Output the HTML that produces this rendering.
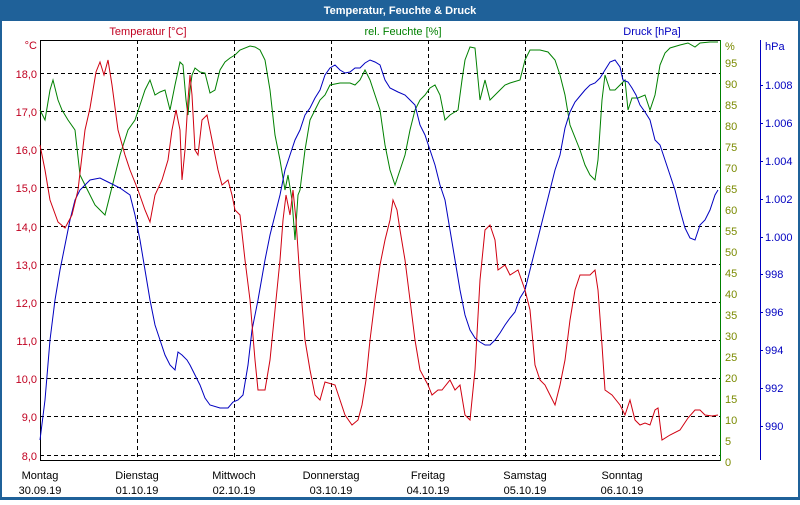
<!DOCTYPE html>
<html><head><meta charset="utf-8"><style>
html,body{margin:0;padding:0;background:#fff}
body{width:800px;height:500px;overflow:hidden;font-family:"Liberation Sans",sans-serif}
</style></head><body>
<svg width="800" height="500" xmlns="http://www.w3.org/2000/svg" font-family="Liberation Sans, sans-serif" font-size="11">
<rect x="0" y="0" width="800" height="500" fill="#1f6199"/>
<rect x="2" y="21" width="796" height="476" fill="#fff"/>
<text x="400" y="14" fill="#fff" font-weight="bold" font-size="11" text-anchor="middle">Temperatur, Feuchte &amp; Druck</text>
<text x="148" y="35" fill="#c00020" text-anchor="middle">Temperatur [°C]</text>
<text x="403" y="35" fill="#008000" text-anchor="middle">rel. Feuchte [%]</text>
<text x="652" y="35" fill="#0000c0" text-anchor="middle">Druck [hPa]</text>
<g stroke="#000" stroke-dasharray="4,3" stroke-width="1">
<line x1="40" y1="73.5" x2="720" y2="73.5"/><line x1="40" y1="111.5" x2="720" y2="111.5"/><line x1="40" y1="149.5" x2="720" y2="149.5"/><line x1="40" y1="187.5" x2="720" y2="187.5"/><line x1="40" y1="226.5" x2="720" y2="226.5"/><line x1="40" y1="264.5" x2="720" y2="264.5"/><line x1="40" y1="302.5" x2="720" y2="302.5"/><line x1="40" y1="340.5" x2="720" y2="340.5"/><line x1="40" y1="378.5" x2="720" y2="378.5"/><line x1="40" y1="416.5" x2="720" y2="416.5"/><line x1="40" y1="455.5" x2="720" y2="455.5"/>
<line x1="137.5" y1="40" x2="137.5" y2="460"/><line x1="234.5" y1="40" x2="234.5" y2="460"/><line x1="331.5" y1="40" x2="331.5" y2="460"/><line x1="428.5" y1="40" x2="428.5" y2="460"/><line x1="525.5" y1="40" x2="525.5" y2="460"/><line x1="622.5" y1="40" x2="622.5" y2="460"/>
</g>
<path d="M40.5 40V460.5H720" stroke="#000" fill="none"/>
<line x1="40" y1="40.5" x2="720" y2="40.5" stroke="#000"/>
<line x1="720.5" y1="40" x2="720.5" y2="461" stroke="#008000"/>
<line x1="760.5" y1="40" x2="760.5" y2="460" stroke="#0000c0"/>
<g fill="#c00020" text-anchor="end">
<text x="37" y="49">°C</text><text x="37" y="78">18,0</text><text x="37" y="116">17,0</text><text x="37" y="154">16,0</text><text x="37" y="192">15,0</text><text x="37" y="231">14,0</text><text x="37" y="269">13,0</text><text x="37" y="307">12,0</text><text x="37" y="345">11,0</text><text x="37" y="383">10,0</text><text x="37" y="421">9,0</text><text x="37" y="460">8,0</text>
</g>
<g fill="#7a8a00">
<text x="725" y="50">%</text><text x="725" y="67">95</text><text x="725" y="88">90</text><text x="725" y="109">85</text><text x="725" y="130">80</text><text x="725" y="151">75</text><text x="725" y="172">70</text><text x="725" y="193">65</text><text x="725" y="214">60</text><text x="725" y="235">55</text><text x="725" y="256">50</text><text x="725" y="277">45</text><text x="725" y="298">40</text><text x="725" y="319">35</text><text x="725" y="340">30</text><text x="725" y="361">25</text><text x="725" y="382">20</text><text x="725" y="403">15</text><text x="725" y="424">10</text><text x="725" y="445">5</text><text x="725" y="466">0</text>
</g>
<g fill="#0000c0">
<text x="765" y="50">hPa</text><text x="765" y="89">1.008</text><text x="765" y="127">1.006</text><text x="765" y="165">1.004</text><text x="765" y="203">1.002</text><text x="765" y="241">1.000</text><text x="765" y="278">998</text><text x="765" y="316">996</text><text x="765" y="354">994</text><text x="765" y="392">992</text><text x="765" y="430">990</text>
</g>
<g stroke="#0000c0"><line x1="761" y1="85.5" x2="763" y2="85.5"/><line x1="761" y1="123.5" x2="763" y2="123.5"/><line x1="761" y1="161.5" x2="763" y2="161.5"/><line x1="761" y1="199.5" x2="763" y2="199.5"/><line x1="761" y1="237.5" x2="763" y2="237.5"/><line x1="761" y1="274.5" x2="763" y2="274.5"/><line x1="761" y1="312.5" x2="763" y2="312.5"/><line x1="761" y1="350.5" x2="763" y2="350.5"/><line x1="761" y1="388.5" x2="763" y2="388.5"/><line x1="761" y1="426.5" x2="763" y2="426.5"/></g>
<g fill="#000" text-anchor="middle" font-size="11">
<text x="40" y="479">Montag</text><text x="40" y="494">30.09.19</text>
<text x="137" y="479">Dienstag</text><text x="137" y="494">01.10.19</text>
<text x="234" y="479">Mittwoch</text><text x="234" y="494">02.10.19</text>
<text x="331" y="479">Donnerstag</text><text x="331" y="494">03.10.19</text>
<text x="428" y="479">Freitag</text><text x="428" y="494">04.10.19</text>
<text x="525" y="479">Samstag</text><text x="525" y="494">05.10.19</text>
<text x="622" y="479">Sonntag</text><text x="622" y="494">06.10.19</text>
</g>
<polyline fill="none" stroke="#008000" points="40,110 45,120 50,90 53,80 58,100 62,110 68,120 75,130 80,175 85,185 95,205 100,210 105,215 110,195 115,175 120,155 128,130 135,120 140,105 145,90 150,80 155,95 160,92 165,90 170,110 175,85 180,62 183,65 186,100 188,115 190,90 192,75 195,68 200,72 205,73 210,93 215,90 220,70 225,62 230,58 235,55 240,50 250,46 255,47 260,50 265,60 270,90 275,135 280,160 285,190 288,175 292,200 295,240 298,195 300,190 305,150 310,120 315,110 320,100 325,95 330,85 340,83 350,83 355,85 360,80 365,70 370,80 375,95 380,110 385,145 390,170 395,185 400,170 405,155 410,130 415,110 420,100 425,95 430,88 435,85 440,95 445,120 450,115 458,110 462,80 465,60 470,47 475,48 480,100 485,80 490,100 495,95 500,90 505,85 510,83 520,80 525,60 530,50 540,50 548,52 555,60 560,75 565,95 570,125 580,150 585,165 590,175 595,180 598,160 602,100 605,75 610,90 615,90 620,85 625,80 628,110 632,98 638,98 645,95 650,110 655,95 660,65 665,53 670,48 680,45 688,43 695,47 700,43 710,42 718,42"/>
<polyline fill="none" stroke="#0000c0" points="40,440 45,400 50,340 55,300 60,270 65,245 70,220 75,200 80,190 90,180 100,178 110,183 120,188 130,195 135,215 140,240 145,270 150,300 155,325 160,340 165,355 170,365 175,370 178,352 182,355 187,360 190,365 195,375 200,385 205,398 210,405 220,408 228,408 233,402 238,400 243,395 248,365 252,330 258,300 265,260 270,235 275,215 280,195 285,170 290,155 295,140 300,130 305,115 310,108 315,98 320,90 325,75 330,68 335,65 340,70 345,73 350,72 355,68 360,68 365,63 370,60 375,62 380,65 385,80 390,88 398,92 405,95 410,100 415,105 420,125 425,135 430,150 435,165 440,185 445,200 450,230 455,260 460,290 465,315 470,330 475,338 480,342 485,345 490,345 495,340 500,333 505,325 510,318 515,312 520,298 525,290 530,270 535,250 540,230 545,210 550,190 555,170 560,155 565,128 570,112 575,102 580,96 585,90 590,85 595,83 600,78 605,70 610,62 615,60 620,67 623,80 628,82 632,88 636,95 640,105 645,112 650,120 655,140 660,145 665,160 670,175 675,190 680,210 685,228 690,238 695,240 700,225 705,220 710,210 715,195 718,190"/>
<polyline fill="none" stroke="#d00010" points="40,145 45,170 50,200 58,222 65,228 72,215 78,190 85,130 90,108 96,72 100,62 104,75 108,60 112,85 118,130 125,155 130,170 138,190 145,210 150,222 155,195 162,180 168,160 172,130 176,110 180,130 182,180 185,150 188,100 190,75 192,95 195,150 198,155 202,120 207,115 212,140 218,170 222,185 228,180 232,195 235,210 240,215 245,260 250,300 255,360 258,390 265,390 270,360 275,310 280,260 283,220 286,195 290,215 293,190 296,220 300,280 305,340 310,370 315,395 320,400 325,382 335,385 340,400 345,415 352,425 358,420 362,405 366,380 370,340 375,300 380,265 385,240 390,220 393,200 397,210 400,230 405,260 410,300 415,340 420,370 428,385 432,395 438,390 442,390 450,380 455,390 460,385 465,415 470,420 475,370 480,280 485,230 490,225 495,240 498,270 505,265 510,275 518,270 525,290 530,310 535,365 540,380 545,385 550,395 555,405 560,385 565,360 570,320 575,290 580,275 590,275 595,270 598,290 602,345 605,390 612,395 620,405 625,415 630,400 635,420 640,425 645,423 650,425 655,410 658,408 662,440 670,435 680,430 688,418 695,410 700,410 705,415 712,416 718,415"/>
</svg>
</body></html>
